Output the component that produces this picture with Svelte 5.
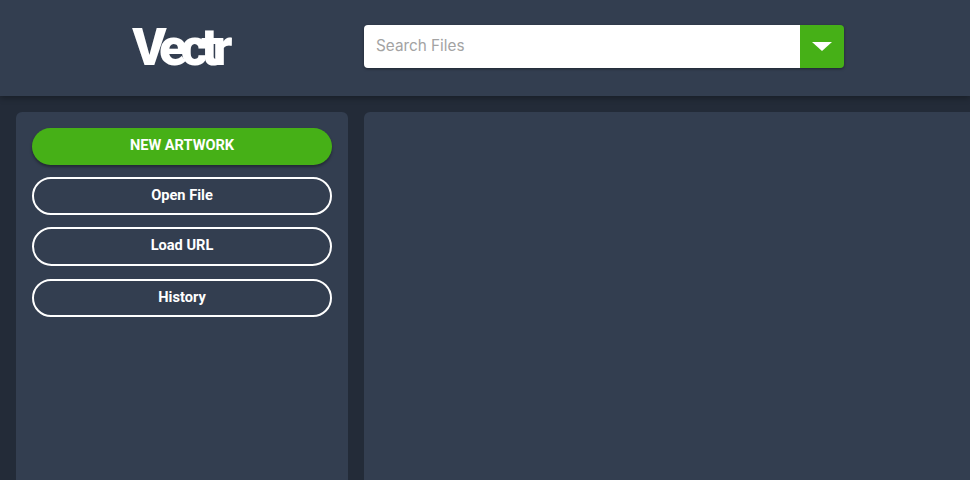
<script>
  const actions = ['Open File', 'Load URL', 'History'];
</script>

<div class="page">
  <header class="top">
    <div class="brand"><div class="logo">Vectr</div></div>
    <div class="search">
      <input class="field" type="text" placeholder="Search Files" />
      <button class="drop" aria-label="Search options">
        <svg width="20" height="9" viewBox="0 0 20 9"><path d="M0 0H20L10 9Z" fill="#fff" /></svg>
      </button>
    </div>
  </header>
  <div class="content">
    <aside class="side">
      <button class="pill primary"><span>NEW ARTWORK</span></button>
      {#each actions as a}
        <button class="pill"><span>{a}</span></button>
      {/each}
    </aside>
    <main class="main"></main>
  </div>
</div>

<style>
  :global(body) { margin: 0; background: #232b38; overflow: hidden; }
  .page { width: 970px; height: 480px; display: flex; flex-direction: column; font-family: Roboto, sans-serif; overflow: hidden; }
  .top { height: 96px; flex: none; background: #333e50; display: flex; align-items: flex-start; box-shadow: 0 2px 6px rgba(0,0,0,.3); position: relative; }
  .brand { width: 364px; flex: none; height: 96px; display: flex; justify-content: center; }
  .logo { margin: 23px 6px 0 0; color: #fff; font-weight: 900; font-size: 52px; letter-spacing: -6.5px; line-height: 50px; height: 50px; }
  .search { margin-top: 25px; width: 480px; height: 43px; display: flex; border-radius: 4px; overflow: hidden; box-shadow: 0 1px 3px rgba(0,0,0,.4); }
  .field { flex: 1; min-width: 0; border: 0; outline: 0; background: #fff; padding: 0 12px 2px; font: 15.3px Inter, sans-serif; color: #333; }
  .field::placeholder { color: #a3a3a3; opacity: 1; }
  .drop { width: 44px; flex: none; background: #46b017; border: 0; padding: 0 0 1px; display: flex; align-items: center; justify-content: center; }
  .content { flex: 1; display: flex; gap: 16px; padding: 16px 0 0 16px; min-height: 0; }
  .side { width: 332px; box-sizing: border-box; flex: none; background: #333e50; border-radius: 6px 6px 0 0; padding: 16px; display: flex; flex-direction: column; gap: 12px; }
  .main { flex: 1; background: #333e50; border-radius: 6px 0 0 0; }
  .pill { height: 38px; box-sizing: border-box; border: 2px solid #fff; border-radius: 20px; background: transparent; color: #fff; font: 700 14.6px Roboto, sans-serif; padding: 0 0 2px; flex: none; }
  .pill:nth-child(3) { height: 39px; padding-bottom: 3px; }
  .pill:nth-child(4) { margin-top: 1px; }
  .primary { height: 37px; border: 0; padding-bottom: 3px; background: #46b017; box-shadow: 0 2px 3px rgba(0,0,0,.35); }
</style>
